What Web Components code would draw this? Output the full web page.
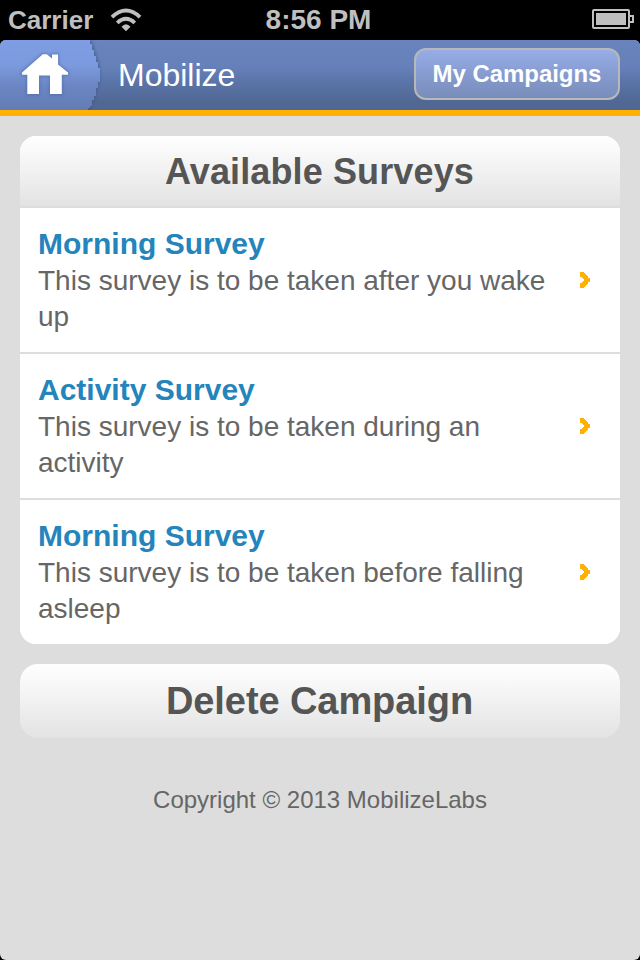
<!DOCTYPE html>
<html lang="en">
<head>
<meta charset="utf-8">
<title>Mobilize</title>
<style>
html{background:#000}
body{margin:0;width:640px;height:960px;overflow:hidden;font-family:"Liberation Sans",Arial,sans-serif;color:#666}
</style>
</head>
<body>
<mobile-screen>
  <status-bar slot="status" carrier="Carrier" time="8:56 PM"></status-bar>
  <app-header slot="header">Mobilize<nav-button slot="action">My Campaigns</nav-button></app-header>
  <survey-menu>
    <span slot="title">Available Surveys</span>
    <survey-item><span slot="name">Morning Survey</span>This survey is to be taken after you wake up</survey-item>
    <survey-item><span slot="name">Activity Survey</span>This survey is to be taken during an activity</survey-item>
    <survey-item><span slot="name">Morning Survey</span>This survey is to be taken before falling asleep</survey-item>
  </survey-menu>
  <wide-button>Delete Campaign</wide-button>
  <page-footer>Copyright © 2013 MobilizeLabs</page-footer>
</mobile-screen>
<script>
const define = (name, html, setup) => customElements.define(name, class extends HTMLElement {
  constructor() {
    super();
    this.attachShadow({mode: 'open'}).innerHTML = html;
  }
  connectedCallback() { if (setup) setup(this, this.shadowRoot); }
});

define('mobile-screen', `
<style>
:host{display:flex;flex-direction:column;width:640px;height:960px;background:#000}
.page{flex:1;min-height:0;display:flex;flex-direction:column;background:#ddd;border-radius:6px;overflow:hidden}
main{display:flex;flex-direction:column;gap:20px;padding:20px}
</style>
<slot name="status"></slot>
<div class="page"><slot name="header"></slot><main><slot></slot></main></div>`);

define('status-bar', `
<style>
:host{display:grid;grid-template-columns:1fr auto 1fr;align-items:center;height:40px;padding:0 6px 0 8px;box-sizing:border-box;color:#bfbfbf;font-weight:bold;font-size:26px;line-height:40px}
.left{display:flex;align-items:center;gap:17px}
.time{font-size:28px;line-height:38px;padding:0 5px 0 0}
.battery{justify-self:end;margin-top:-2px}
svg{display:block}
</style>
<div class="left"><span class="carrier"></span>
<svg width="32" height="24" viewBox="0 0 32 24" fill="none" stroke="#bfbfbf" stroke-width="3.8">
<path d="M2 9.2Q16-4 30 9.2"/><path d="M7.2 14.8Q16 6.8 24.8 14.8"/><path d="M16 23.2L11.5 18.8Q16 13.8 20.5 18.8Z" fill="#bfbfbf" stroke="none"/></svg></div>
<span class="time"></span>
<svg class="battery" width="42" height="20" viewBox="0 0 42 20"><rect x="1" y="1" width="36" height="18" rx="1" fill="none" stroke="#bfbfbf" stroke-width="2"/><path d="M4 4H34V16H4Z" fill="#bfbfbf"/><path d="M38 7H41V13H38" fill="none" stroke="#bfbfbf" stroke-width="2"/></svg>`,
(host, root) => {
  root.querySelector('.carrier').textContent = host.getAttribute('carrier');
  root.querySelector('.time').textContent = host.getAttribute('time');
});

define('app-header', `
<style>
:host{display:flex;align-items:center;height:76px;box-sizing:border-box;border-bottom:6px solid #ffb000;background:linear-gradient(#6984bd,#6681ba 38%,#5b75aa 58%,#516894 88%,#506793);color:#fff;font-size:32px;line-height:70px}
home-tab{margin-right:14px}
.title{flex:1}
</style>
<home-tab></home-tab><span class="title"><slot></slot></span><slot name="action"></slot>`);

define('home-tab', `
<style>:host{display:block;width:104px;height:70px}svg{display:block}</style>
<svg width="104" height="70" viewBox="0 0 104 70">
<defs><linearGradient id="g" x2="0" y2="1"><stop stop-color="#7f9de3"/><stop offset=".38" stop-color="#7b99dd"/><stop offset=".65" stop-color="#6b86c4"/><stop offset="1" stop-color="#637cb4"/></linearGradient>
<filter id="s" x="-20%" y="-20%" width="140%" height="140%"><feGaussianBlur stdDeviation="1.5"/></filter></defs>
<path d="M0 0H91L94 8L97 18L100 27V40L97 50L94 60L90 70H0Z" fill="#3c5488" opacity=".65" filter="url(#s)"/>
<path d="M0 0H90V4H92V10H94V16H96V22H98V28H100V42H98V48H96V56H94V60H92V66H90V68H88V70H0Z" fill="url(#g)"/>
<path d="M42.5 14H47L52 18V14H58V24L68 31.5V35H62V54.5H50V36H39V54.5H27V35H22V31.5Z" fill="#415b92" stroke="#415b92" stroke-width="1.5" opacity=".45" filter="url(#s)"/>
<path d="M42.8 14.2H46.8L52 18.5V14.5H58V24.5L68 32.5V34.8H61.8V54H50V35.5H39V54H27.3V34.8H22V32.5Z" fill="#fff"/></svg>`);

define('nav-button', `
<style>:host{display:block;width:206px;height:52px;box-sizing:border-box;margin:-2px 20px 0 0;border:2px solid #b8b8b8;border-radius:12px;background:linear-gradient(#96ade7,#8398cb 60%,#798dbb);font-size:24px;font-weight:bold;line-height:48px;text-align:center;letter-spacing:-.05px}</style>
<slot></slot>`);

define('survey-menu', `
<style>
:host{display:block;border-radius:16px;overflow:hidden;background:#fff}
h1{margin:0;height:70px;font-size:36px;line-height:71px;text-align:center;letter-spacing:.12px;text-indent:-1px;color:#555;background:linear-gradient(#fff,#e3e3e3)}
</style>
<h1><slot name="title"></slot></h1><slot></slot>`);

define('survey-item', `
<style>
:host{display:flex;align-items:center;height:146px;box-sizing:border-box;border-top:2px solid #ddd;padding:0 29px 0 18px;background:#fff;font-size:28px;line-height:36px}
.text{flex:1}
.name{display:block;color:#2484bc;font-size:30px;font-weight:bold;margin:-1px 0 1px;padding-top:1px}
p{margin:0 0 -1px;width:520px}
svg{display:block;flex:none}
</style>
<div class="text"><span class="name"><slot name="name"></slot></span><p><slot></slot></p></div>
<svg width="12" height="16" viewBox="0 0 12 16"><path d="M1 0H5V1H6V2H7V3H8V4H9V6H11V10H9V12H8V13H7V14H6V15H5V16H1V11H3V10H4V9H5V7H4V6H3V5H1Z" fill="#ffb000"/></svg>`);

define('wide-button', `
<style>:host{display:block;height:74px;border-radius:18px;background:linear-gradient(#fff,#e3e3e3);color:#555;font-size:38px;font-weight:bold;line-height:74px;text-align:center;letter-spacing:-.08px;text-indent:-1px}</style>
<slot></slot>`);

define('page-footer', `
<style>:host{display:block;padding-top:28px;font-size:24px;line-height:28px;text-align:center}</style>
<slot></slot>`);
</script>
</body>
</html>
